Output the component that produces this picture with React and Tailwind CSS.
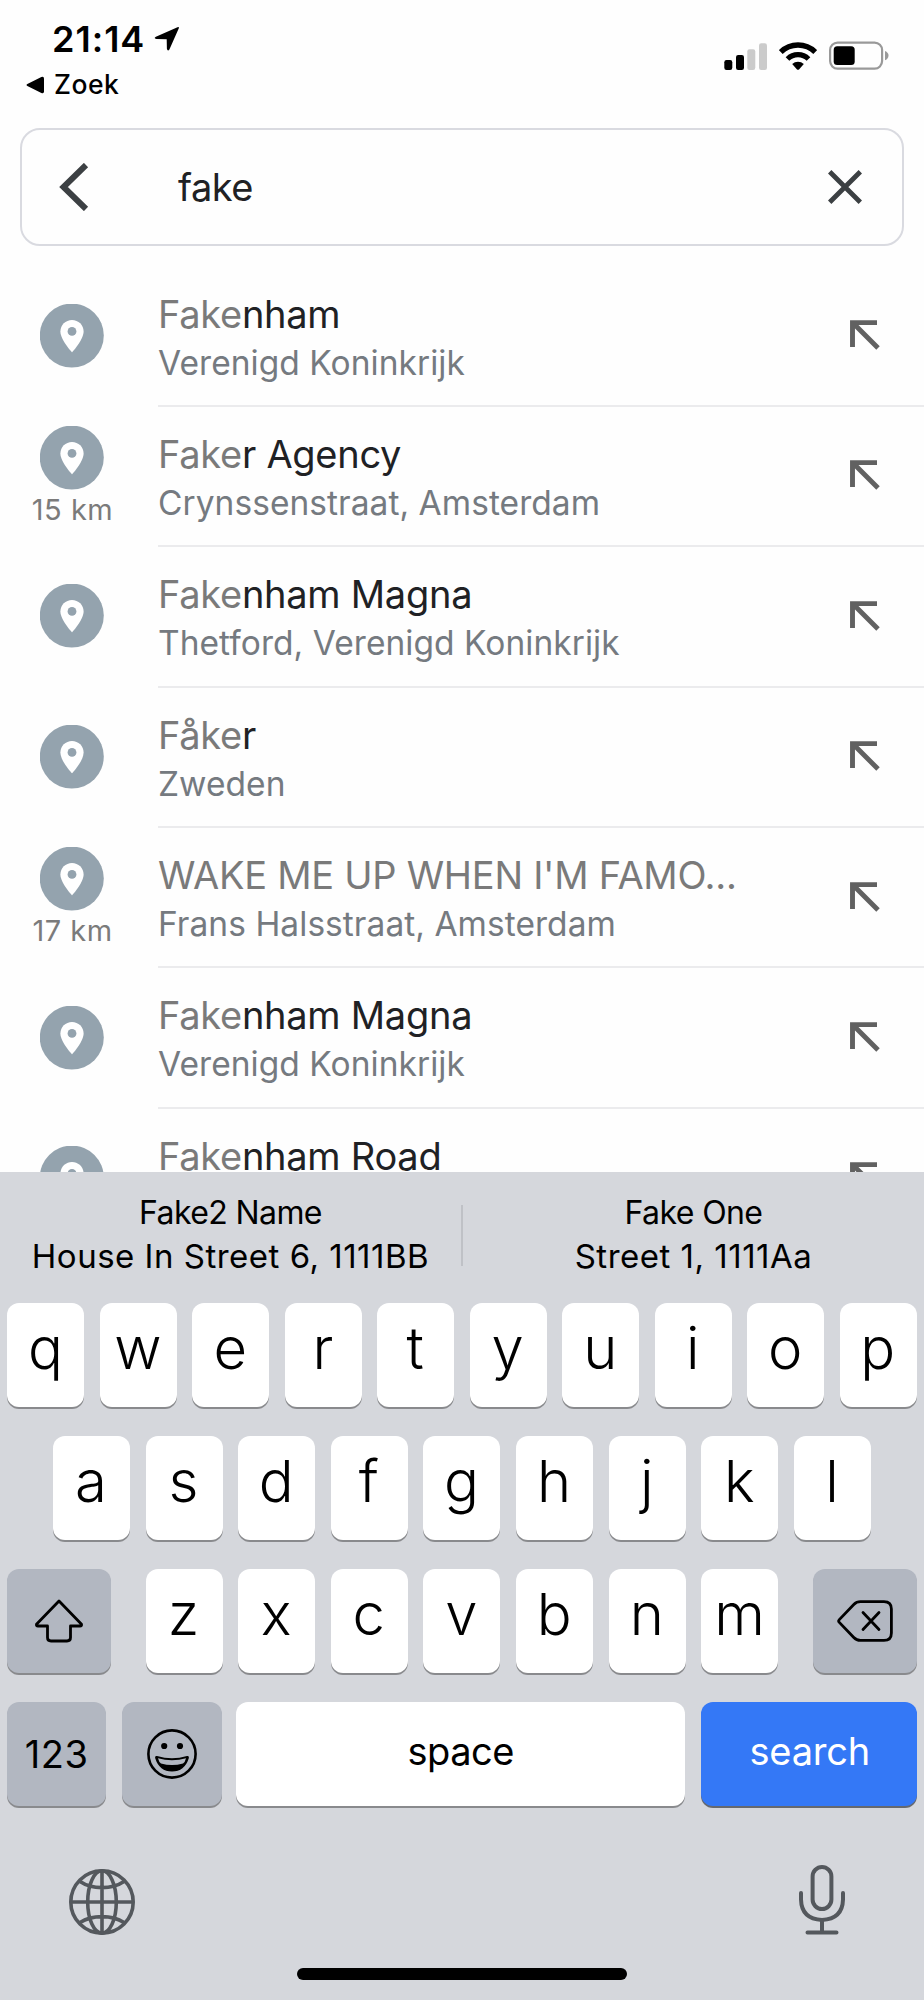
import React from "react";

const results = [
  { match: "Fake", rest: "nham", sub: "Verenigd Koninkrijk" },
  { match: "Fake", rest: "r Agency", sub: "Crynssenstraat, Amsterdam", distance: "15 km" },
  { match: "Fake", rest: "nham Magna", sub: "Thetford, Verenigd Koninkrijk" },
  { match: "Fåke", rest: "r", sub: "Zweden" },
  { match: "WAKE ME UP WHEN I'M FAMO...", rest: "", sub: "Frans Halsstraat, Amsterdam", distance: "17 km" },
  { match: "Fake", rest: "nham Magna", sub: "Verenigd Koninkrijk" },
  { match: "Fake", rest: "nham Road" },
];

const StatusBar = () => (
  <div className="flex h-32 shrink-0 justify-between text-black">
    <div className="pt-[15px] pl-[26px]">
      <div className="flex items-center pl-[26px]">
        <span className="w-[102px] text-[36px] leading-[48px] font-semibold tracking-[1px]">21:14</span>
        <svg width="26" height="26" viewBox="0 0 26 26">
          <path d="M23.5 1.2 Q25.5 .4 24.7 2.6 L15.4 23.4 Q13.7 26 12.9 22.8 L12.7 13.3 L2.4 13.1 Q-.8 12.3 1.9 10.7 Z" />
        </svg>
      </div>
      <div className="flex items-center">
        <svg width="18" height="18" viewBox="0 0 18 18">
          <path d="M1.4 7.9 L15.4 .9 Q18 0 18 2.4 V15.6 Q18 18 15.4 17.1 L1.4 10.1 Q-.4 9 1.4 7.9 Z" />
        </svg>
        <span className="ml-[10px] text-[26.5px] leading-[43px] font-medium tracking-[0.5px]">Zoek</span>
      </div>
    </div>
    <div className="mr-[35px] mt-[42px] flex h-7 items-end">
      <svg width="43" height="28" viewBox="0 0 43 28">
        <rect x="0.3" y="18" width="8" height="10" rx="2.2" />
        <rect x="12" y="13" width="8" height="15" rx="2.2" />
        <rect x="23.3" y="7.3" width="8" height="20.7" rx="2.2" fill="#cbcbcb" />
        <rect x="35" y="1.3" width="8" height="26.7" rx="2.2" fill="#cbcbcb" />
      </svg>
      <svg className="ml-3" width="38" height="28" viewBox="0 0 38 28">
        <path d="M1.8 10 A24.5 24.5 0 0 1 36.2 10" fill="none" stroke="#000" strokeWidth="5.4" />
        <path d="M8.5 17 A15 15 0 0 1 29.5 17" fill="none" stroke="#000" strokeWidth="5.2" />
        <path d="M13.2 22 A8.4 8.4 0 0 1 24.8 22 L20 27.4 Q19 28.2 18 27.4 Z" />
      </svg>
      <svg className="ml-3" width="60" height="29" viewBox="0 0 60 29">
        <rect x="1.1" y="1.6" width="52" height="26" rx="7.5" fill="none" stroke="#999" strokeWidth="2.2" />
        <rect x="4.7" y="5.3" width="21" height="18.7" rx="3.5" />
        <path d="M56 10 Q59.5 11.5 59.5 14.5 Q59.5 17.8 56 19.2 Z" fill="#999" />
      </svg>
    </div>
  </div>
);

const SearchBox = () => (
  <div className="mx-5 flex h-[118px] shrink-0 items-center rounded-[20px] border-2 border-[#d9dae0] pr-10 pl-[37px]">
    <svg width="30" height="48" viewBox="0 0 30 48" fill="none" stroke="#3c4043" strokeWidth="6">
      <path d="M27 2 L4.5 24 L27 46" />
    </svg>
    <span className="ml-[89px] grow text-[38px] tracking-[-0.5px] text-[#202124]">fake</span>
    <svg width="34" height="34" viewBox="0 0 34 34" fill="none" stroke="#3c4043" strokeWidth="4.8">
      <path d="M1.7 1.7 L32.3 32.3 M32.3 1.7 L1.7 32.3" />
    </svg>
  </div>
);

const Pin = () => (
  <svg className="shrink-0" width="64" height="64" viewBox="0 0 64 64">
    <circle cx="31.8" cy="31.6" r="32" fill="#94a3ae" />
    <path
      d="M32 16 C25.6 16 20.4 21 20.4 27.5 C20.4 36 32 48.3 32 48.3 C32 48.3 43.6 36 43.6 27.5 C43.6 21 38.4 16 32 16 Z"
      fill="#fff"
    />
    <circle cx="32" cy="27.4" r="4.4" fill="#94a3ae" />
  </svg>
);

const ResultRow = ({ match, rest, sub, distance }) => (
  <div className="flex h-[140.4px] shrink-0">
    <div className="flex w-[158px] flex-col items-center justify-center pr-[15px] pb-[2px]">
      <Pin />
      {distance && (
        <span className="h-[37px] pl-0.5 text-[29px] leading-[40px] tracking-[0.5px] whitespace-nowrap text-[#7b7b7b]">{distance}</span>
      )}
    </div>
    <div className="flex grow border-b-2 border-[#ebebed] pr-11">
      <div className="grow pt-[23px] whitespace-nowrap">
        <div className="text-[38px] leading-[49px] tracking-[-0.27px] text-[#202124]">
          <span className="text-[#7a7a7a]">{match}</span>
          {rest}
        </div>
        {sub && <div className="text-[33.5px] leading-[49.5px] tracking-[0.05px] text-[#757a80]">{sub}</div>}
      </div>
      <svg className="mt-[53.5px] shrink-0" width="30" height="30" viewBox="0 0 30 30" fill="none" stroke="#616161" strokeWidth="4.9">
        <path d="M27 2.6 H2.5 V27 M3 3 L28 28" />
      </svg>
    </div>
  </div>
);

const Key = ({ label }) => (
  <div className="flex h-[104px] w-[77px] shrink-0 items-center justify-center rounded-xl bg-white pr-px pb-[13px] text-[58px] font-light text-black shadow-[0_2px_0_#898a8d]">
    {label}
  </div>
);

const Suggestion = ({ name, address }) => (
  <div className="flex-1 text-center whitespace-nowrap text-black">
    <div className="text-[32px] leading-[44px] tracking-[-0.6px]">{name}</div>
    <div className="text-[33px] leading-[42px] tracking-[0.5px]">{address}</div>
  </div>
);

const Keyboard = () => (
  <div className="flex h-[828px] shrink-0 flex-col bg-[#d5d7dc]">
    <div className="flex h-[131px] shrink-0 pt-[19px]">
      <Suggestion name="Fake2 Name" address="House In Street 6, 1111BB" />
      <div className="mt-[14px] h-[61px] w-0.5 bg-[#bfc1c6]" />
      <Suggestion name="Fake One" address="Street 1, 1111Aa" />
    </div>
    <div className="flex flex-col gap-[29px] px-[7.4px]">
      <div className="flex justify-between">
        {"qwertyuiop".split("").map((k) => <Key key={k} label={k} />)}
      </div>
      <div className="flex justify-between px-[45.5px]">
        {"asdfghjkl".split("").map((k) => <Key key={k} label={k} />)}
      </div>
      <div className="flex justify-between">
        <div className="flex h-[104px] w-[103.5px] items-center justify-center rounded-xl bg-[#b2b7c1] shadow-[0_2px_0_#898a8d]">
          <svg width="50" height="44" viewBox="0 0 50 44" fill="none" stroke="#000" strokeWidth="2.8" strokeLinejoin="round">
            <path d="M25 2 L47.5 25.2 Q48 27 46 27 H36.5 V38.5 Q36.5 42 33 42 H17 Q13.5 42 13.5 38.5 V27 H4 Q2 27 2.5 25.2 Z" />
          </svg>
        </div>
        <div className="flex w-[633px] justify-between">
          {"zxcvbnm".split("").map((k) => <Key key={k} label={k} />)}
        </div>
        <div className="flex h-[104px] w-[103.5px] items-center justify-center rounded-xl bg-[#b2b7c1] shadow-[0_2px_0_#898a8d]">
          <svg width="56" height="42" viewBox="0 0 56 42" fill="none" stroke="#000" strokeWidth="2.8" strokeLinecap="round" strokeLinejoin="round">
            <path d="M2.3 19.6 L16.8 4.5 Q19.5 1.6 23.5 1.6 H47 Q54.4 1.6 54.4 9 V33 Q54.4 40.4 47 40.4 H23.5 Q19.5 40.4 16.8 37.5 L2.3 22.4 Q1 21 2.3 19.6 Z" />
            <path d="M26 12.5 L42 29.5 M42 12.5 L26 29.5" />
          </svg>
        </div>
      </div>
      <div className="flex">
        <div className="flex h-[104px] w-[98.5px] items-center justify-center rounded-xl bg-[#b2b7c1] text-[38px] tracking-[0.5px] text-black shadow-[0_2px_0_#898a8d]">
          123
        </div>
        <div className="ml-4 flex h-[104px] w-[100.5px] items-center justify-center rounded-xl bg-[#b2b7c1] pb-px shadow-[0_2px_0_#898a8d]">
          <svg width="50" height="50" viewBox="0 0 50 50">
            <circle cx="25" cy="25" r="23.6" fill="none" stroke="#000" strokeWidth="2.6" />
            <circle cx="17.2" cy="17" r="3.1" />
            <circle cx="33" cy="17" r="3.1" />
            <path d="M10 27 Q25 31.5 40 27 Q42.5 26.5 41.7 29.5 Q37.5 42.5 25 42.5 Q12.5 42.5 8.3 29.5 Q7.5 26.5 10 27 Z" />
            <path d="M11 29.3 Q25 33.3 39 29.3 Q38 33.5 36 34.5 Q25 37.5 14 34.5 Q12 33.5 11 29.3 Z" fill="#b2b7c1" />
          </svg>
        </div>
        <div className="ml-[14px] flex h-[104px] w-[448.5px] items-center justify-center rounded-xl bg-white pb-1.5 text-[38px] tracking-[-0.5px] text-black shadow-[0_2px_0_#898a8d]">
          space
        </div>
        <div className="ml-[16px] flex h-[104px] grow items-center justify-center rounded-xl bg-[#3478f6] pb-1.5 pl-0.5 text-[38px] tracking-[-0.2px] text-white shadow-[0_2px_0_#65686f]">
          search
        </div>
      </div>
    </div>
    <div className="mt-[58.5px] flex justify-between pr-[79px] pl-[69px]">
      <svg className="mt-1" width="66" height="66" viewBox="0 0 66 66" fill="none" stroke="#54585d" strokeWidth="3.6">
        <circle cx="33" cy="33" r="31.2" />
        <ellipse cx="33" cy="33" rx="14.3" ry="31.2" />
        <path d="M33 2 V64 M2 33 H64 M11 12.5 Q20 18.6 33 18.6 Q46 18.6 55 12.5 M11 53.5 Q20 47.6 33 47.6 Q46 47.6 55 53.5" />
      </svg>
      <svg width="46" height="70" viewBox="0 0 46 70" fill="none" stroke="#54585d" strokeWidth="4" strokeLinecap="round">
        <rect x="13.6" y="2" width="18.8" height="42" rx="9.4" />
        <path d="M2 28 V34.5 Q2.5 54 23 55 Q43.5 54 44 34.5 V28 M23 55 V67.5 M8.5 67.5 H37.5" />
      </svg>
    </div>
    <div className="mx-auto mt-[33.5px] h-3 w-[330px] rounded-full bg-black" />
  </div>
);

const App = () => (
  <div className="flex h-[2000px] w-[924px] flex-col overflow-hidden bg-[#fefefe] font-['Inter',sans-serif]">
    <StatusBar />
    <SearchBox />
    <div className="flex h-[926px] shrink-0 flex-col overflow-hidden pt-[20.5px]">
      {results.map((r, i) => <ResultRow key={i} {...r} />)}
    </div>
    <Keyboard />
  </div>
);

export default App;
